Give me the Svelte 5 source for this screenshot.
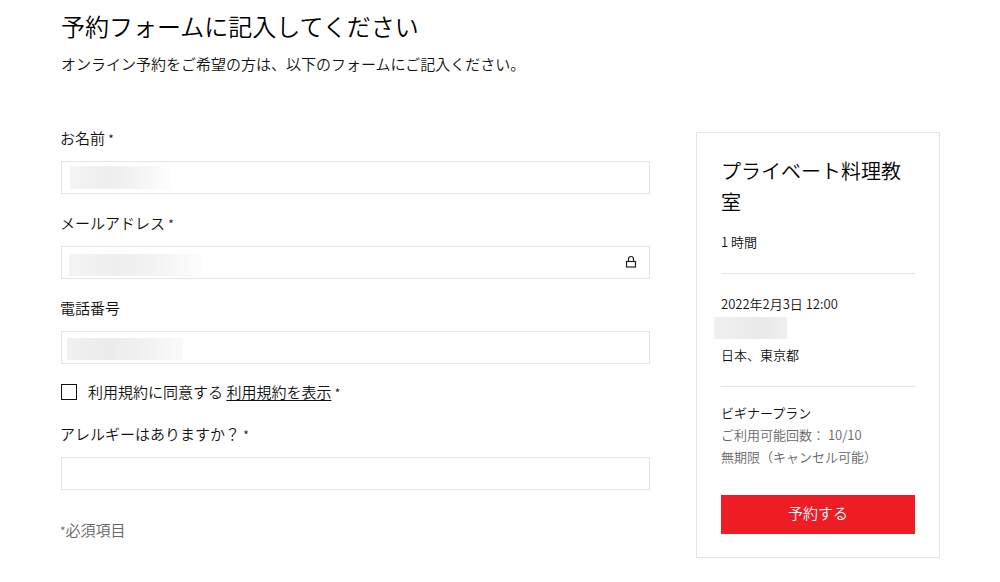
<script>
    let form = $state({
        name: '',
        email: '',
        phone: '',
        agreed: false,
        allergy: '',
    });

    function handle_submit(event) {
        event.preventDefault();
    }
</script>

<main class="page">
    <header class="intro">
        <h1>予約フォームに記入してください</h1>
        <p>オンライン予約をご希望の方は、以下のフォームにご記入ください。</p>
    </header>

    <div class="columns">
        <form id="booking" class="form" onsubmit={handle_submit}>
            <div class="field">
                <label for="name">お名前 <span class="star">*</span></label>
                <div class="control">
                    <input id="name" type="text" bind:value={form.name} />
                    <span class="mask mask-name"></span>
                </div>
            </div>

            <div class="field">
                <label for="email">メールアドレス <span class="star">*</span></label>
                <div class="control">
                    <input id="email" type="email" readonly value={form.email} />
                    <span class="mask mask-email"></span>
                    <svg class="lock" viewBox="0 0 12 14" width="12" height="14" aria-hidden="true">
                        <rect x="1.5" y="6.5" width="9" height="5.5" fill="none" stroke="#222" stroke-width="1.2" />
                        <path d="M3.5 6.5V4a2.5 2.5 0 0 1 5 0v2.5" fill="none" stroke="#222" stroke-width="1.2" />
                    </svg>
                </div>
            </div>

            <div class="field">
                <label for="phone">電話番号</label>
                <div class="control">
                    <input id="phone" type="tel" bind:value={form.phone} />
                    <span class="mask mask-phone"></span>
                </div>
            </div>

            <div class="terms">
                <input id="terms" type="checkbox" bind:checked={form.agreed} />
                <div>
                    <label for="terms">利用規約に同意する</label>
                    <a href="#terms">利用規約を表示</a>
                    <span class="star">*</span>
                </div>
            </div>

            <div class="field">
                <label for="allergy">アレルギーはありますか？ <span class="star">*</span></label>
                <div class="control">
                    <input id="allergy" type="text" bind:value={form.allergy} />
                </div>
            </div>

            <p class="required"><span class="star">*</span>必須項目</p>
        </form>

        <aside class="card">
            <section>
                <h2>プライベート料理教室</h2>
                <p>1 時間</p>
            </section>
            <section class="place">
                <p>2022年2月3日 12:00</p>
                <div class="staff"></div>
                <p>日本、東京都</p>
            </section>
            <section class="plan">
                <p>ビギナープラン</p>
                <p class="muted">ご利用可能回数： 10/10</p>
                <p class="muted">無期限（キャンセル可能）</p>
            </section>
            <button type="submit" form="booking">予約する</button>
        </aside>
    </div>
</main>

<style>
    :global(body) {
        margin: 0;
        background: #fff;
    }

    .page {
        padding: 8px 60px 24px;
        font-family: 'Noto Sans CJK JP', sans-serif;
        font-weight: 350;
        font-size: 15px;
        line-height: 24px;
        color: #111;
    }

    h1,
    h2,
    p {
        margin: 0;
        font-weight: inherit;
    }

    h1 {
        font-size: 24px;
        line-height: 36px;
        color: #000;
    }

    .intro {
        padding-left: 1px;
    }

    .intro p {
        margin-top: 8px;
    }

    .columns {
        display: grid;
        grid-template-columns: 1fr 244px;
        gap: 46px;
        align-items: start;
        margin-top: 56px;
    }

    .form {
        margin-top: -6px;
    }

    .field {
        display: flex;
        flex-direction: column;
        gap: 11px;
        margin-bottom: 17px;
    }

    .star {
        font-size: 12px;
        line-height: 1;
    }

    .control {
        position: relative;
        margin-left: 1px;
    }

    .control input {
        display: block;
        box-sizing: border-box;
        width: 100%;
        height: 33px;
        padding: 0 8px;
        border: 1px solid #e4e4e4;
        border-radius: 0;
        background: #fff;
        font: inherit;
        color: inherit;
        outline: none;
    }

    .mask {
        position: absolute;
        pointer-events: none;
        background: linear-gradient(to right, #f4f4f4, #eeeeee 35%, #f2f2f2 60%, #fdfdfd);
    }

    .mask-name {
        left: 9px;
        top: 5px;
        width: 100px;
        height: 23px;
    }

    .mask-email {
        left: 8px;
        top: 8px;
        width: 133px;
        height: 22px;
    }

    .mask-phone {
        left: 6px;
        top: 7px;
        width: 116px;
        height: 22px;
        background: linear-gradient(to right, #f1f1f1, #ebebeb 35%, #f1f1f1 65%, #fafafa);
    }

    .lock {
        position: absolute;
        right: 13px;
        top: 9px;
    }

    .terms {
        display: flex;
        align-items: center;
        gap: 11px;
        margin: -1px 0 18px 1px;
    }

    .terms input {
        appearance: none;
        width: 16px;
        height: 16px;
        margin: 0;
        border: 1px solid #111;
        background: #fff;
    }

    .terms input:checked {
        background: #111;
        box-shadow: inset 0 0 0 3px #fff;
    }

    .terms a {
        color: inherit;
        text-underline-offset: 2px;
    }

    .required {
        margin-top: 28px;
        color: #666;
    }

    .card {
        box-sizing: border-box;
        padding: 22px 24px 23px;
        border: 1px solid #e4e4e4;
        font-size: 13px;
        line-height: 22px;
    }

    .card section {
        padding-bottom: 20px;
        margin-bottom: 19px;
        border-bottom: 1px solid #e4e4e4;
    }

    .card h2 {
        margin-bottom: 14px;
        font-size: 20px;
        line-height: 31px;
        color: #000;
    }

    .staff {
        width: 73px;
        height: 22px;
        margin: 2px 0 5px -7px;
        background: linear-gradient(to right, #f1f1f1, #e9e9e9 60%, #efefef);
    }

    .card .place {
        margin-bottom: 15px;
    }

    .card .plan {
        padding-bottom: 0;
        margin-bottom: 27px;
        border-bottom: 0;
    }

    .muted {
        color: #666;
    }

    button {
        display: block;
        width: 100%;
        height: 39px;
        padding: 0 0 4px;
        border: 0;
        background: #ee1c25;
        font: inherit;
        font-size: 15px;
        color: #fff;
        cursor: pointer;
    }
</style>
